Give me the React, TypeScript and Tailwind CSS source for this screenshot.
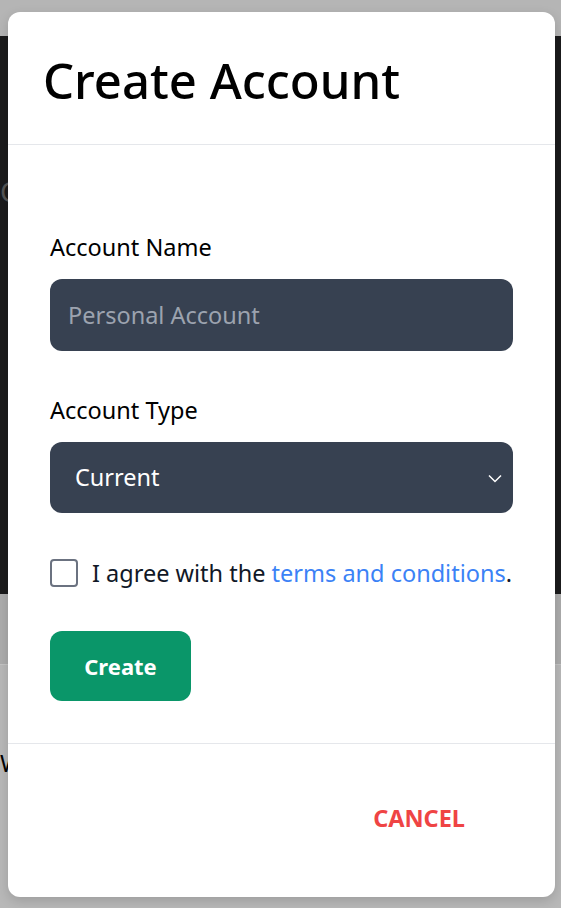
import { useState } from "react";

export default function App() {
  const [agreed, setAgreed] = useState(false);
  const [name, setName] = useState("");
  const [type, setType] = useState("current");

  return (
    <div
      className="relative h-[908px] w-full overflow-hidden bg-[#b8b8b8]"
      style={{ fontFamily: '"Noto Sans", "Open Sans", sans-serif' }}
    >
      {/* dimmed page behind the modal */}
      <div className="h-[36px] bg-[#b5b5b5]" />
      <div className="h-[558px] bg-[#1b1b1c] pt-[134px] text-[28px] text-[#555]">C</div>
      <div className="h-[71px] border-b border-[#c4c4c4] bg-[#acacac]" />
      <div className="pt-[80px] text-[24px] text-black">W</div>

      {/* modal */}
      <div className="absolute left-[8px] top-[12px] flex h-[885px] w-[547px] flex-col rounded-xl bg-white shadow-[0_4px_12px_rgba(0,0,0,0.15)]">
        <div className="flex h-[133px] items-center border-b border-[#e5e7eb] px-[35px] pt-[4px]">
          <h1 className="text-[49px] leading-none font-medium text-black">Create Account</h1>
        </div>

        <form
          className="flex flex-1 flex-col px-[42px] pt-[86px]"
          onSubmit={(e) => e.preventDefault()}
        >
          <label htmlFor="accountName" className="mb-[16px] text-[23.5px] leading-[32px] text-black">
            Account Name
          </label>
          <input
            id="accountName"
            value={name}
            onChange={(e) => setName(e.target.value)}
            placeholder="Personal Account"
            className="h-[72px] w-full rounded-xl bg-[#374151] px-[18px] text-[23.5px] text-white placeholder:text-[#9ca3af] outline-none"
          />

          <label htmlFor="accountType" className="mt-[43px] mb-[16px] text-[23.5px] leading-[32px] text-black">
            Account Type
          </label>
          <div className="relative">
            <select
              id="accountType"
              value={type}
              onChange={(e) => setType(e.target.value)}
              className="h-[71px] w-full appearance-none rounded-xl bg-[#374151] px-[25px] text-[23.5px] text-white outline-none"
            >
              <option value="current">Current</option>
              <option value="savings">Savings</option>
            </select>
            <svg
              className="pointer-events-none absolute right-[10px] top-1/2 h-[16px] w-[16px] -translate-y-1/2 text-white"
              viewBox="0 0 16 16"
              fill="none"
              stroke="currentColor"
              strokeWidth="1.5"
            >
              <path d="M2 5.5l6 6 6-6" />
            </svg>
          </div>

          <div className="mt-[44px] flex items-center gap-[14px]">
            <input
              type="checkbox"
              checked={agreed}
              onChange={(e) => setAgreed(e.target.checked)}
              className="h-[28px] w-[28px] shrink-0 appearance-none rounded-[4px] border-2 border-[#6b7280] bg-white"
            />
            <span className="text-[23.5px] leading-[32px] text-[#111827]">
              I agree with the <a href="#" className="text-[#3b82f6]">terms and conditions</a>.
            </span>
          </div>

          <button
            type="submit"
            className="mt-[42px] h-[70px] w-[141px] rounded-xl bg-[#0a9669] text-[22px] font-bold text-white"
          >
            Create
          </button>
        </form>

        <div className="flex h-[154px] items-center justify-end border-t border-[#e5e7eb] pr-[90px] pb-[4px]">
          <button type="button" className="text-[23.5px] font-bold text-[#ef4444]">
            CANCEL
          </button>
        </div>
      </div>
    </div>
  );
}
